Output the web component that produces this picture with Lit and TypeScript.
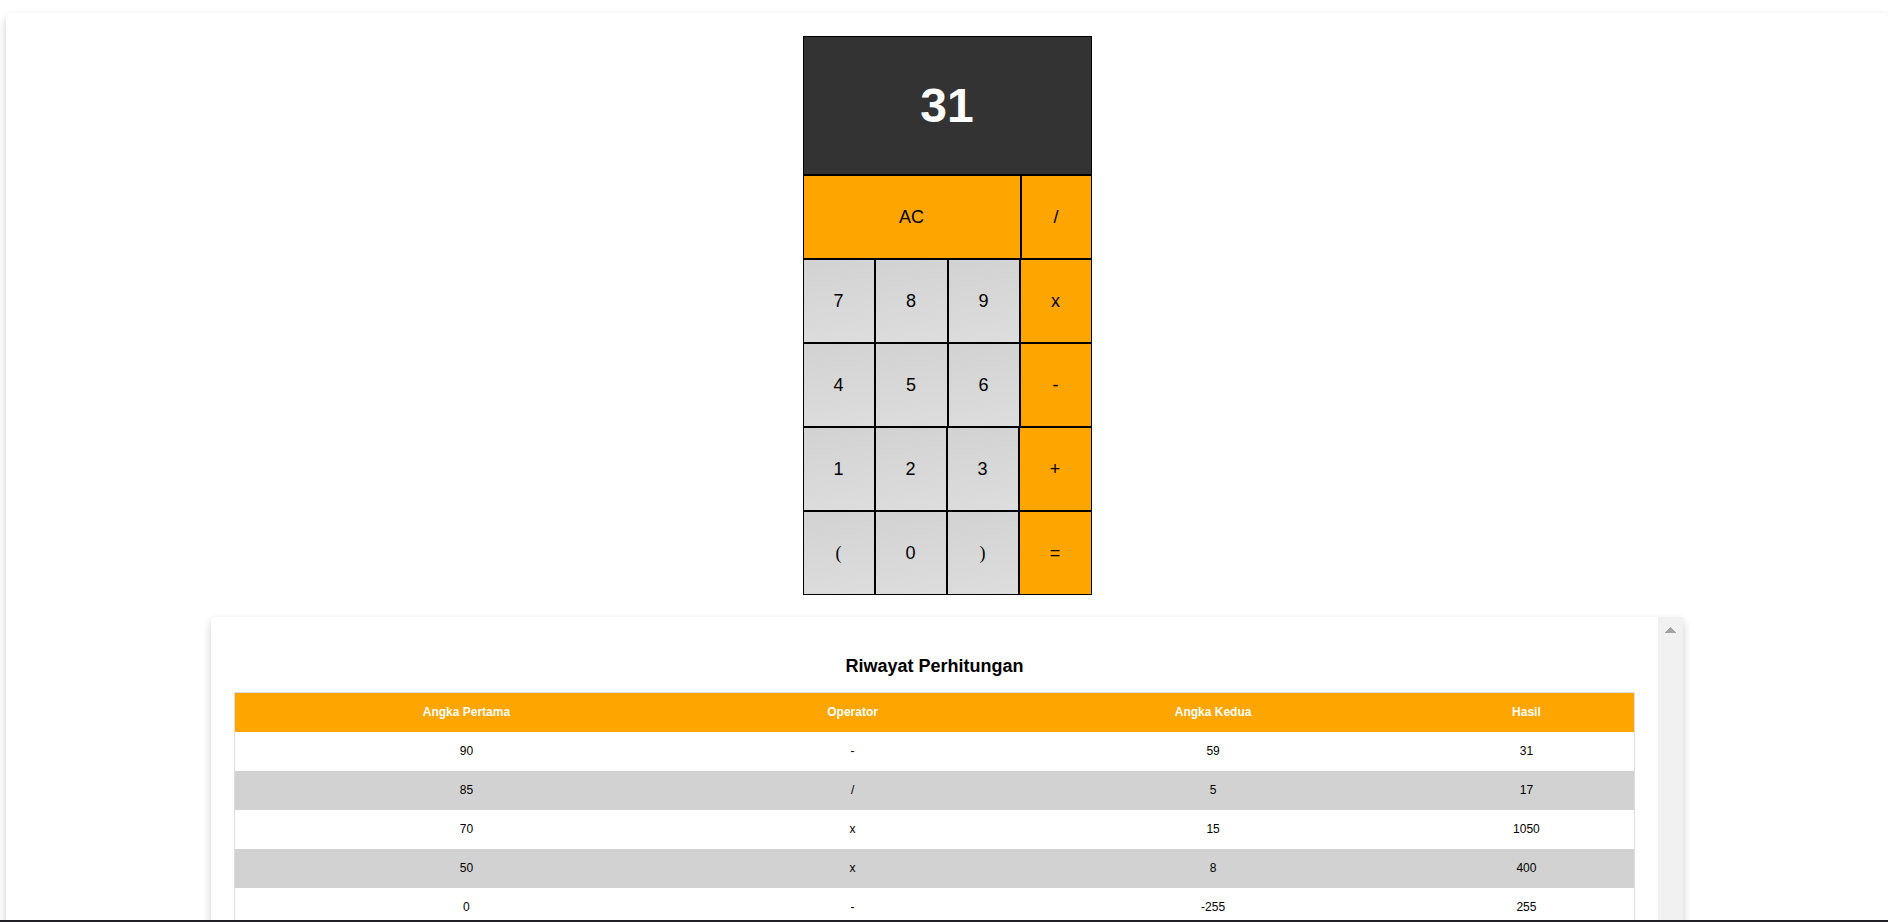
import { LitElement, html, css } from "lit";
import { customElement, state } from "lit/decorators.js";
import { classMap } from "lit/directives/class-map.js";

interface Entry {
  first: string;
  operator: string;
  second: string;
  result: string;
}

const KEY_ROWS: { layout: string; keys: string[] }[] = [
  { layout: "wide", keys: ["AC", "/"] },
  { layout: "upper", keys: ["7", "8", "9", "x"] },
  { layout: "upper", keys: ["4", "5", "6", "-"] },
  { layout: "lower", keys: ["1", "2", "3", "+"] },
  { layout: "lower", keys: ["(", "0", ")", "="] },
];

const OPERATORS = ["/", "x", "-", "+"];

@customElement("calc-pad")
class CalcPad extends LitElement {
  @state() private display = "31";
  private stored = "";
  private operator = "";
  private fresh = true;

  static styles = css`
    :host {
      display: block;
      width: 289px;
    }
    .display {
      box-sizing: border-box;
      display: flex;
      align-items: center;
      justify-content: center;
      height: 139px;
      border: 1px solid #000;
      background: #333;
      color: #fff;
      font-size: 48px;
      font-weight: 700;
    }
    .row {
      display: grid;
      height: 84px;
    }
    .wide {
      grid-template-columns: 218px 1fr;
    }
    .upper {
      grid-template-columns: 72px 73px 72px 1fr;
    }
    .lower {
      grid-template-columns: 72px 72px 72px 1fr;
    }
    .key {
      margin: 0;
      padding: 0;
      border: 1px solid #000;
      border-radius: 0;
      background: linear-gradient(170deg, #d2d2d2, #dddddd);
      color: #000;
      font: 18px Arial, "Liberation Sans", sans-serif;
      cursor: pointer;
    }
    .action {
      background: orange;
    }
    .paren {
      font-family: "Times New Roman", "Liberation Serif", serif;
    }
  `;

  private press(key: string) {
    if (key === "AC") {
      this.display = "0";
      this.stored = "";
      this.operator = "";
      this.fresh = true;
    } else if (OPERATORS.includes(key)) {
      this.stored = this.display;
      this.operator = key;
      this.fresh = true;
    } else if (key === "=") {
      this.calculate();
    } else {
      this.display = this.fresh ? key : this.display + key;
      this.fresh = false;
    }
  }

  private calculate() {
    const a = Number(this.stored);
    const b = Number(this.display);
    const results: Record<string, number> = {
      "+": a + b,
      "-": a - b,
      x: a * b,
      "/": a / b,
    };
    if (this.operator) {
      const entry: Entry = {
        first: String(a),
        operator: this.operator,
        second: String(b),
        result: String(results[this.operator]),
      };
      this.display = entry.result;
      this.dispatchEvent(new CustomEvent("calculated", { detail: entry }));
    }
    this.operator = "";
    this.fresh = true;
  }

  render() {
    return html`
      <div class="display">${this.display}</div>
      ${KEY_ROWS.map(
        (row) => html`<div class="row ${row.layout}">
          ${row.keys.map(
            (key) => html`<button
              type="button"
              class=${classMap({
                key: true,
                action: key === "AC" || key === "=" || OPERATORS.includes(key),
                paren: key === "(" || key === ")",
              })}
              @click=${() => this.press(key)}
            >${key}</button>`
          )}
        </div>`
      )}
    `;
  }
}

@customElement("app-root")
class AppRoot extends LitElement {
  @state() private entries: Entry[] = [
    { first: "90", operator: "-", second: "59", result: "31" },
    { first: "85", operator: "/", second: "5", result: "17" },
    { first: "70", operator: "x", second: "15", result: "1050" },
    { first: "50", operator: "x", second: "8", result: "400" },
    { first: "0", operator: "-", second: "-255", result: "255" },
  ];

  static styles = css`
    :host {
      display: flex;
      flex-direction: column;
      height: 100vh;
      background: #fff;
      color: #000;
      font-family: Arial, "Liberation Sans", sans-serif;
    }
    .page {
      flex: 1;
      min-height: 0;
      overflow: hidden;
      padding: 13px 0 0 6px;
    }
    .edge {
      height: 2px;
      background: #202124;
    }
    .card {
      border-radius: 5px;
      box-shadow: 0 4px 8px rgba(0, 0, 0, 0.2);
      background: #fff;
    }
    .main {
      display: flex;
      flex-direction: column;
      align-items: center;
      gap: 22px;
      padding: 23px 21px;
    }
    .history {
      display: flex;
      width: 80%;
      min-height: 360px;
      overflow: hidden;
      border-radius: 5px 0 0 5px;
    }
    .content {
      flex: 1;
      padding: 23px;
    }
    h3 {
      margin: 16px 0;
      font-size: 18px;
      line-height: 20px;
      text-align: center;
    }
    table {
      width: 100%;
      border: 1px solid #ddd;
      border-collapse: collapse;
      font-size: 12px;
      line-height: 15px;
      text-align: center;
    }
    .first {
      width: 33.1%;
    }
    .operator {
      width: 22.1%;
    }
    .second {
      width: 29.4%;
    }
    .result {
      width: 15.4%;
    }
    th,
    td {
      padding: 12px;
    }
    th {
      background: orange;
      color: #fff;
    }
    tbody tr:nth-child(even) {
      background: #d2d2d2;
    }
    .scrollbar {
      display: flex;
      justify-content: center;
      width: 25px;
      padding-top: 10px;
      box-sizing: border-box;
      background: #f1f1f1;
    }
  `;

  private addEntry(event: CustomEvent<Entry>) {
    this.entries = [event.detail, ...this.entries];
  }

  render() {
    return html`
      <main class="page">
        <div class="card main">
          <calc-pad @calculated=${this.addEntry}></calc-pad>
          <section class="card history">
            <div class="content">
              <h3>Riwayat Perhitungan</h3>
              <table>
                <thead>
                  <tr>
                    <th class="first">Angka Pertama</th>
                    <th class="operator">Operator</th>
                    <th class="second">Angka Kedua</th>
                    <th class="result">Hasil</th>
                  </tr>
                </thead>
                <tbody>
                  ${this.entries.map(
                    (entry) => html`<tr>
                      <td>${entry.first}</td>
                      <td>${entry.operator}</td>
                      <td>${entry.second}</td>
                      <td>${entry.result}</td>
                    </tr>`
                  )}
                </tbody>
              </table>
            </div>
            <div class="scrollbar" aria-hidden="true">
              <svg width="11" height="6" viewBox="0 0 11 6" shape-rendering="crispEdges">
                <path d="M5 0h1v1h1v1h1v1h1v1h1v1h1v1H0V5h1V4h1V3h1V2h1V1h1z" fill="#a3a3a3" />
              </svg>
            </div>
          </section>
        </div>
      </main>
      <div class="edge"></div>
    `;
  }
}
